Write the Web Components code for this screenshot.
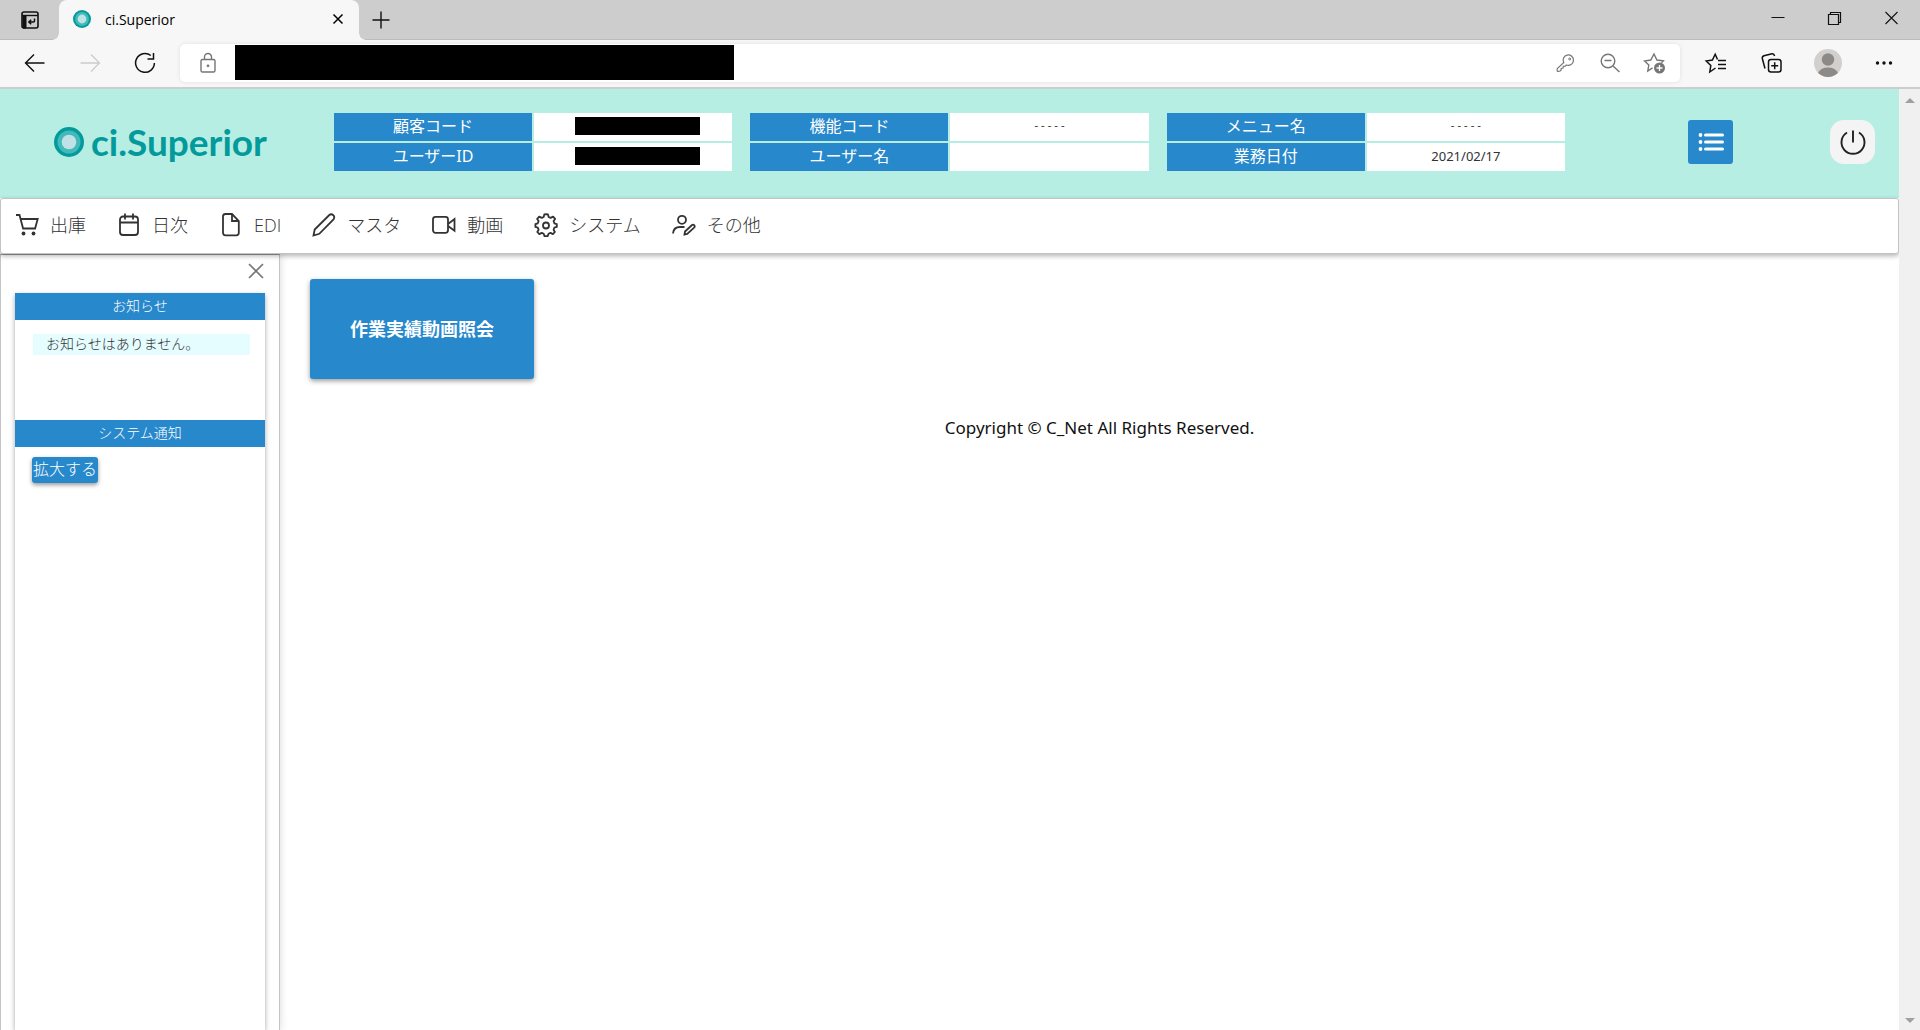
<!DOCTYPE html>
<html lang="ja">
<head>
<meta charset="utf-8">
<title>ci.Superior</title>
<style>
  html, body { margin: 0; height: 100%; }
  body {
    overflow: hidden;
    background: #fff;
    color: #333;
    font-family: "Noto Sans", "Noto Sans CJK JP", sans-serif;
    font-size: 16px;
    --blue: #2788cc;
    --mint: #b6eee4;
    --chrome: #cdcdcd;
    --bar: #f7f7f7;
  }
</style>
</head>
<body>
<app-window></app-window>

<script>
const RESET = `
  *, *::before, *::after { box-sizing: border-box; }
  button { font: inherit; color: inherit; background: none; border: 0; padding: 0; margin: 0;
    display: flex; align-items: center; justify-content: center; }
`;

function define(name, html) {
  const template = document.createElement('template');
  template.innerHTML = html.replace('<style>', '<style>' + RESET);
  customElements.define(name, class extends HTMLElement {
    constructor() {
      super();
      this.attachShadow({ mode: 'open' }).append(template.content.cloneNode(true));
    }
  });
}

const ICONS = {
  tabs: [20, `<rect x="2" y="2" width="16" height="16" rx="2" stroke-width="1.6"/><path d="M2 5.500h16" stroke-width="1.4"/><path d="M3 6h3v12H3z" fill="currentColor"/><path d="M14.500 8.500v2.500q0 1-1 1H9m2.200-2.300L8.800 12l2.400 2.300" stroke-width="1.500"/>`],
  close: [18, `<path d="M4.500 4.500l9 9M13.500 4.500l-9 9" stroke-width="1.500"/>`],
  dismiss: [18, `<path d="M2 2l14 14M16 2L2 16" stroke-width="1.700"/>`],
  plus: [20, `<path d="M10 1.500v17M1.500 10h17" stroke-width="1.400"/>`],
  minimise: [20, `<path d="M3.500 9.500h13" stroke-width="1"/>`],
  restore: [20, `<path d="M3.500 6.500h10v10h-10z" stroke-width="1.200"/><path d="M5.500 6V4.500h10v10H14" stroke-width="1.200"/>`],
  shut: [20, `<path d="M3.500 4l12 12M15.500 4l-12 12" stroke-width="1.100"/>`],
  back: [22, `<path d="M20.500 11H2M10 2.500L1.500 11l8.500 8.500" stroke-width="1.400"/>`],
  forward: [22, `<path d="M1.500 11H20M12 2.500l8.500 8.500-8.500 8.500" stroke-width="1.300"/>`],
  reload: [22, `<path d="M16.800 3.500A9.400 9.400 0 1 0 20.400 11" stroke-width="1.500"/><path d="M19.500 1v6h-6" stroke-width="1.500"/>`],
  lock: [22, `<rect x="4" y="7.500" width="14" height="12.500" rx="1.500" stroke-width="1.400"/><path d="M7.500 7.500V5a3.500 3.500 0 0 1 7 0v2.500" stroke-width="1.400"/><circle cx="11" cy="13.800" r="1.400" fill="currentColor" stroke="none"/>`],
  key: [20, `<path d="M8.700 9.600A5.200 5.200 0 1 1 11.400 12l-1.200 1.100-1.900.2-.2 1.800-1.900.3-.2 1.700-1 .9q-1.200.6-2.700.1-.5-1.500.2-2.700z" stroke-width="1.200"/><circle cx="14.700" cy="6" r="1" stroke-width="1"/>`],
  zoomout: [22, `<circle cx="9" cy="9" r="6.800" stroke-width="1.400"/><path d="M5.500 8.500h7M14 14l6.500 6" stroke-width="1.400"/>`],
  staradd: [24, `<path d="M9.500 16.800L4.800 20l1-6L1.500 10l6.300-1L11 3l2.900 6 6.500.8-2 2" stroke-width="1.400"/><circle cx="16.500" cy="17" r="5.500" fill="currentColor" stroke="none"/><path d="M16.500 14v6M13.500 17h6" stroke="#fff" stroke-width="1.300"/>`],
  favourites: [24, `<path d="M11.500 17l-5.700 4 1-6.500L2.200 10l6.200-1L11.200 3.200 13.500 8.500" stroke-width="1.500"/><path d="M14 9.500h8M14 13.500h8M14 17.500h8" stroke-width="1.500"/>`],
  collections: [24, `<rect x="8.500" y="8.500" width="12.500" height="12.500" rx="2.500" stroke-width="1.500"/><path d="M14.700 11.200v7M11.200 14.700h7M5 17.500L2.300 7.500Q2 5.500 4 4.800L12 2.800q2-.3 2.600 2.200" stroke-width="1.500"/>`],
  avatar: [28, `<circle cx="14" cy="14" r="14" fill="#d2d0ce" stroke="none"/><circle cx="14" cy="10.500" r="6.200" fill="#8d8986" stroke="none"/><path d="M4 23.800Q7 18.500 14 18.500t10 5.300A14 14 0 0 1 4 23.800z" fill="#8d8986" stroke="none"/>`],
  dots: [20, `<circle cx="3.500" cy="10" r="1.700" fill="currentColor" stroke="none"/><circle cx="10" cy="10" r="1.700" fill="currentColor" stroke="none"/><circle cx="16.500" cy="10" r="1.700" fill="currentColor" stroke="none"/>`],
  ring: [30, `<circle cx="15" cy="15" r="15" fill="#029a9b" stroke="none"/><circle cx="15" cy="15" r="11.500" fill="#43b9ba" stroke="none"/><circle cx="15" cy="15" r="7.300" fill="#bfe2e6" stroke="none"/>`],
  list: [28, `<path d="M8.500 7h17M8.500 14h17M8.500 21h17" stroke-width="3" stroke-linecap="round"/><circle cx="3.500" cy="7" r="1.900" fill="currentColor" stroke="none"/><circle cx="3.500" cy="14" r="1.900" fill="currentColor" stroke="none"/><circle cx="3.500" cy="21" r="1.900" fill="currentColor" stroke="none"/>`],
  power: [28, `<path d="M14 2.500v12M8 4.500a11.500 11.500 0 1 0 12 0" stroke-width="1.900"/>`],
  cart: [24, `<path d="M1 2h3.500l3.600 13.500h12L22.700 6H5.500" stroke-width="1.800"/><circle cx="8.500" cy="20.500" r="1.900" fill="currentColor" stroke="none"/><circle cx="18.500" cy="20.500" r="1.900" fill="currentColor" stroke="none"/>`],
  calendar: [24, `<rect x="3" y="3.500" width="18" height="18.500" rx="3" stroke-width="1.800"/><path d="M3 9.500h18M8 .5v6M16 .5v6" stroke-width="1.800"/>`],
  file: [24, `<path d="M13 1H6.500Q4 1 4 3.500v16Q4 22.300 6.500 22.300h10.800q2.500 0 2.500-2.500V8z" stroke-width="1.800"/><path d="M13 1v7h6.800" stroke-width="1.800"/>`],
  pen: [24, `<path d="M1.500 22.500l1.200-6L17.300 2q2-1.500 4 .2 1.800 2 .2 4.200L7.300 20.800z" stroke-width="1.800"/>`],
  video: [24, `<rect x="1" y="3.800" width="15" height="16" rx="2.500" stroke-width="1.800"/><path d="M16 11l6.500-5v11.800L16 13" stroke-width="1.800"/>`],
  gear: [24, `<path d="M12 1.200l2 .2.600 2.600 2 .9 2.500-1.300 2 2.300-1.500 2.200.7 2.200 2.500.8v2.800l-2.500.8-.7 2 1.300 2.300-2 2.100-2.400-1.200-2 .9-.8 2.400h-3.200l-.8-2.400-2-.9-2.400 1.200-2-2.100 1.300-2.300-.8-2-2.400-.8v-2.800l2.400-.8.8-2.200L3.200 5.900l2-2.300L7.700 4.900l2-.9.600-2.600z" stroke-width="1.800" stroke-linejoin="round"/><circle cx="12" cy="12.500" r="3" stroke-width="1.800"/>`],
  useredit: [24, `<circle cx="10" cy="6.800" r="4" stroke-width="1.800"/><path d="M1 20.500Q1.500 14 8 14h4.500M12.500 21.500l.5-3 7-6.500q1.300-.8 2.300.3.900 1.200-.2 2.300l-6.900 6.300z" stroke-width="1.800"/>`],
};

customElements.define('ui-icon', class extends HTMLElement {
  connectedCallback() {
    const [box, shapes] = ICONS[this.getAttribute('name')];
    const size = this.getAttribute('size') || box;
    const root = this.shadowRoot || this.attachShadow({ mode: 'open' });
    root.innerHTML = `<style>:host{display:block;flex:none}svg{display:block}</style>
      <svg width="${size}" height="${size}" viewBox="0 0 ${box} ${box}" fill="none" stroke="currentColor" aria-hidden="true">${shapes}</svg>`;
  }
});

define('tab-strip', `<style>
  :host { display: flex; height: 40px; background: var(--chrome); color: #111; box-shadow: inset 0 -1px #bcbcbc; }
  .actions { width: 59px; }
  .tab { position: relative; width: 300px; display: flex; align-items: center; padding: 0 12px 2px 14px;
    background: var(--bar); border-radius: 8px 8px 0 0; font: 14px "Open Sans", sans-serif; color: #000; }
  .tab::before, .tab::after { content: ""; position: absolute; bottom: 0; width: 6px; height: 6px; }
  .tab::before { right: 100%; background: radial-gradient(circle at 0 0, transparent 5px, var(--bar) 6px); }
  .tab::after { left: 100%; background: radial-gradient(circle at 100% 0, transparent 5px, var(--bar) 6px); }
  .title { flex: 1; padding-left: 14px; }
  .new { width: 44px; }
  .window { margin-left: auto; display: flex; }
  .window button { width: 57px; height: 36px; }
  </style>
  <button class="actions" aria-label="Tab actions"><ui-icon name="tabs"></ui-icon></button>
  <div class="tab"><ui-icon name="ring" size="18"></ui-icon><span class="title">ci.Superior</span>
    <button aria-label="Close tab"><ui-icon name="close"></ui-icon></button></div>
  <button class="new" aria-label="New tab"><ui-icon name="plus"></ui-icon></button>
  <div class="window">
    <button aria-label="Minimise"><ui-icon name="minimise"></ui-icon></button>
    <button aria-label="Restore"><ui-icon name="restore"></ui-icon></button>
    <button aria-label="Close window"><ui-icon name="shut"></ui-icon></button>
  </div>`);

define('address-toolbar', `<style>
  :host { display: flex; align-items: center; height: 49px; padding: 0 8px 2px 7px; background: var(--bar);
    border-bottom: 2px solid var(--chrome); color: #111; }
  button { width: 55px; height: 40px; }
  button:disabled { color: #ccc; }
  .box { flex: 1; height: 38px; margin: 0 8px; padding-right: 3px; display: flex; align-items: center;
    background: #fff; border-radius: 5px; box-shadow: 0 0 4px rgba(0,0,0,.1); color: #767676; }
  .box button { width: 45px; }
  .box .lock { width: 55px; }
  input { width: 499px; height: 35px; border: 0; padding: 0; background: #000; color: #000; margin-right: auto; }
  .tools { display: flex; }
  .tools button { width: 56px; }
  </style>
  <button aria-label="Back"><ui-icon name="back"></ui-icon></button>
  <button aria-label="Forward" disabled><ui-icon name="forward"></ui-icon></button>
  <button aria-label="Reload"><ui-icon name="reload"></ui-icon></button>
  <div class="box">
    <button class="lock" aria-label="Site information"><ui-icon name="lock"></ui-icon></button>
    <input type="text" aria-label="Address">
    <button aria-label="Passwords"><ui-icon name="key"></ui-icon></button>
    <button aria-label="Zoom"><ui-icon name="zoomout"></ui-icon></button>
    <button aria-label="Add favourite"><ui-icon name="staradd"></ui-icon></button>
  </div>
  <div class="tools">
    <button aria-label="Favourites"><ui-icon name="favourites"></ui-icon></button>
    <button aria-label="Collections"><ui-icon name="collections"></ui-icon></button>
    <button aria-label="Profile"><ui-icon name="avatar"></ui-icon></button>
    <button aria-label="Settings and more"><ui-icon name="dots"></ui-icon></button>
  </div>`);

define('info-list', `<style>
  :host { display: block; flex: 1; }
  dl { margin: 0; display: grid; grid-template-columns: 1fr 1fr; grid-auto-rows: 28px; gap: 2px; }
  </style><dl><slot></slot></dl>`);

define('info-row', `<style>
  :host { display: contents; }
  dt, dd { margin: 0; display: flex; align-items: center; justify-content: center; line-height: 24px; padding-bottom: 2px; }
  dt { background: var(--blue); color: #fff; }
  dd { background: #fff; color: #333; font-size: 13px; }
  ::slotted(.mask) { width: 125px; height: 18px; margin-left: 9px; background: #000; }
  ::slotted(.dash) { font: 11px/24px "DejaVu Sans Mono", monospace; }
  </style><dt><slot name="label"></slot></dt><dd><slot></slot></dd>`);

define('app-header', `<style>
  :host { display: flex; align-items: center; height: 109px; padding: 0 24px 3px 54px; background: var(--mint); }
  .logo { display: flex; align-items: center; gap: 7px; width: 280px; color: #029a9b; font: 700 37px/40px Lato, sans-serif; }
  .infos { display: flex; gap: 18px; width: 1231px; }
  .buttons { flex: 1; display: flex; justify-content: flex-end; gap: 97px; }
  .buttons button { width: 45px; height: 44px; }
  .menu { background: var(--blue); border-radius: 3px; color: #fff; }
  .power { background: #f4f4f4; border-radius: 14px; color: #222; }
  </style>
  <div class="logo"><ui-icon name="ring"></ui-icon><span>ci.Superior</span></div>
  <div class="infos">
    <info-list>
      <info-row><span slot="label">顧客コード</span><span class="mask"></span></info-row>
      <info-row><span slot="label">ユーザーID</span><span class="mask"></span></info-row>
    </info-list>
    <info-list>
      <info-row><span slot="label">機能コード</span><span class="dash">-----</span></info-row>
      <info-row><span slot="label">ユーザー名</span></info-row>
    </info-list>
    <info-list>
      <info-row><span slot="label">メニュー名</span><span class="dash">-----</span></info-row>
      <info-row><span slot="label">業務日付</span><span>2021/02/17</span></info-row>
    </info-list>
  </div>
  <div class="buttons">
    <button class="menu" aria-label="メニュー"><ui-icon name="list"></ui-icon></button>
    <button class="power" aria-label="ログアウト"><ui-icon name="power"></ui-icon></button>
  </div>`);

define('nav-item', `<style>
  :host { display: block; }
  a { display: flex; align-items: center; gap: 11px; color: inherit; text-decoration: none; white-space: nowrap; }
  </style><a href="#"><slot name="icon"></slot><slot></slot></a>`);

define('nav-menu', `<style>
  :host { display: block; position: relative; z-index: 1; background: #fff; border: 1px solid #c4c4c4; border-radius: 3px;
    box-shadow: 0 2px 5px rgba(0,0,0,.3); color: #333; font: 300 18px/24px "Open Sans", "Noto Sans CJK JP", sans-serif; }
  nav { display: flex; align-items: center; gap: 31px; height: 54px; padding: 0 14px 2px; }
  </style><nav><slot></slot></nav>`);

define('notice-section', `<style>
  :host { display: block; }
  h2 { margin: 0; height: 27px; background: var(--blue); color: #fff; text-align: center; font: inherit; line-height: 25px; }
  div { padding: 10px 15px 10px 17px; }
  </style><h2><slot name="title"></slot></h2><div><slot></slot></div>`);

define('side-panel', `<style>
  :host { display: flex; flex-direction: column; width: 280px; flex: none; padding: 0 14px; font-size: 14px; font-weight: 300;
    border: 1px solid #c4c4c4; border-top-color: #999; border-bottom: 0; box-shadow: 0 0 8px rgba(0,0,0,.16); }
  .close { align-self: flex-end; width: 18px; height: 32px; margin-bottom: 6px; color: #777; }
  .panel { flex: 1; box-shadow: 0 2px 5px rgba(0,0,0,.35); }
  .first { min-height: 127px; }
  p { margin: 4px 0 0 1px; padding: 0 0 2px 13px; background: #e5fdff; line-height: 19px; }
  .expand { height: 26px; padding-bottom: 2px; width: 66px; background: var(--blue); color: #fff; font-size: 16px; line-height: 24px; white-space: nowrap;
    border-radius: 3px; box-shadow: 0 2px 4px rgba(0,0,0,.4); }
  </style>
  <button class="close" aria-label="閉じる"><ui-icon name="dismiss"></ui-icon></button>
  <div class="panel">
    <notice-section class="first"><span slot="title">お知らせ</span><p>お知らせはありません。</p></notice-section>
    <notice-section><span slot="title">システム通知</span><button class="expand">拡大する</button></notice-section>
  </div>`);

define('main-content', `<style>
  :host { display: block; flex: 1; padding: 25px 10px 25px 30px; }
  .tile { width: 224px; height: 100px; padding-bottom: 3px; background: var(--blue); color: #fff; font-size: 18px; font-weight: 700;
    border-radius: 3px; box-shadow: 0 2px 5px rgba(0,0,0,.4); }
  footer { margin-top: 37px; text-align: center; color: #111; font-size: 17px; line-height: 24px; }
  </style>
  <button class="tile">作業実績動画照会</button>
  <footer>Copyright © C_Net All Rights Reserved.</footer>`);

define('scroll-rail', `<style>
  :host { display: flex; flex-direction: column; justify-content: space-between; align-items: center; width: 21px; flex: none;
    padding: 9px 0 7px; background: #f0f0f0; }
  i { border: 5px solid transparent; }
  .up { border-top: 0; border-bottom-color: #a0a0a0; }
  .down { border-bottom: 0; border-top-color: #a0a0a0; }
  </style><i class="up"></i><i class="down"></i>`);

define('app-window', `<style>
  :host { display: flex; flex-direction: column; height: 100vh; overflow: hidden; }
  .view { flex: 1; min-height: 0; display: flex; }
  .page { flex: 1; min-width: 0; display: flex; flex-direction: column; overflow: hidden; }
  .body { flex: 1; display: flex; }
  </style>
  <tab-strip></tab-strip>
  <address-toolbar></address-toolbar>
  <div class="view">
    <div class="page">
      <app-header></app-header>
      <nav-menu>
        <nav-item><ui-icon slot="icon" name="cart"></ui-icon>出庫</nav-item>
        <nav-item><ui-icon slot="icon" name="calendar"></ui-icon>日次</nav-item>
        <nav-item><ui-icon slot="icon" name="file"></ui-icon>EDI</nav-item>
        <nav-item><ui-icon slot="icon" name="pen"></ui-icon>マスタ</nav-item>
        <nav-item><ui-icon slot="icon" name="video"></ui-icon>動画</nav-item>
        <nav-item><ui-icon slot="icon" name="gear"></ui-icon>システム</nav-item>
        <nav-item><ui-icon slot="icon" name="useredit"></ui-icon>その他</nav-item>
      </nav-menu>
      <div class="body"><side-panel></side-panel><main-content></main-content></div>
    </div>
    <scroll-rail></scroll-rail>
  </div>`);
</script>
</body>
</html>
